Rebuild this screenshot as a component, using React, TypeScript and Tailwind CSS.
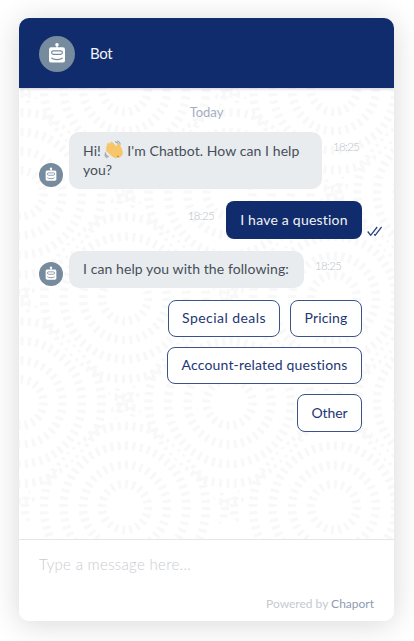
import React from "react";

const centers: [number, number][] = [
  [106, 1], [315, 1], [1.5, 105.500], [210.500, 105.500], [106, 210], [315, 210],
  [1.5, 314.500], [210.500, 314.500], [106, 419], [315, 419], [419.500, 105.500], [419.500, 314.500],
];
const rings: [number, number][] = [[23, 20], [42, 36], [61.5, 52], [81, 68], [100, 84]];

function Pattern() {
  return (
    <svg className="absolute inset-0 h-full w-full" aria-hidden="true">
      <defs>
        <clipPath id="tile">
          <path d="M0-112 112 0 0 112-112 0Z" />
        </clipPath>
      </defs>
      {centers.map(([cx, cy]) => (
        <g key={`${cx}-${cy}`} transform={`translate(${cx} ${cy})`} clipPath="url(#tile)">
          {rings.map(([r, count]) => (
            <circle
              key={r}
              r={r}
              fill="none"
              stroke="#f8f8f8"
              strokeWidth="8.5"
              pathLength={count * 10}
              strokeDasharray="4.2 5.8"
            />
          ))}
        </g>
      ))}
    </svg>
  );
}

function BotAvatar({ className }: { className: string }) {
  return (
    <svg viewBox="0 0 36 36" className={`shrink-0 ${className}`}>
      <circle cx="18" cy="18" r="18" fill="#778b9e" />
      <circle cx="18" cy="8.7" r="1.8" fill="#fff" />
      <path d="M18 9v4" stroke="#fff" strokeWidth="1.2" />
      <rect x="10" y="11.2" width="16" height="15.4" rx="2.2" fill="#fff" />
      <rect x="12.6" y="14.8" width="10.8" height="3.6" rx="1.8" fill="none" stroke="#778b9e" strokeWidth="1.2" />
      <path d="M12.5 21.8c1.3 2.3 9.7 2.3 11 0" fill="none" stroke="#778b9e" strokeWidth="1.2" />
    </svg>
  );
}

function Wave() {
  return (
    <svg viewBox="0 0 20 20" className="-ml-px inline-block h-5 w-5 align-[-4px]">
      <path d="M11 1.6Q14.5 2.5 14.9 6M13.2.8Q16 2 16.4 4.5M1.2 12.5Q1.5 15.8 4.8 16.8M.7 14.700Q1.3 17 3.5 18" fill="none" stroke="#9ba8b8" strokeWidth="1.2" />
      <path d="M3.4 3.9q1-1.4 2.2-.2l.8.8-.1-1.6q.9-1.5 2.1-.3L13 7.200V4.900q1.500-2.200 3 .3l2.100 5.600q1.400 4.500-2.600 6.400-4.200 2-7.700-1.500L2.300 11q-.5-1.700 1-1.500l-1-1.500q-.3-1.400 1-1.400l.7.300-.9-1.300z" fill="#f7c56a" stroke="#f7c56a" strokeWidth=".6" />
      <path d="m6.400 4.600 3.200 3.200M4 7l3.700 3.600" fill="none" stroke="#efbb5c" strokeWidth=".4" />
      <circle cx="14" cy="16.300" r=".6" fill="#695d4c" />
    </svg>
  );
}

function Time({ children }: { children: React.ReactNode }) {
  return <span className="block text-[11.5px] font-light leading-4 tracking-[-0.65px] text-[#b9bfc7]">{children}</span>;
}

function Choice({ children, className }: { children: React.ReactNode; className: string }) {
  return (
    <button className={`flex items-center justify-center whitespace-nowrap rounded-[8px] border border-[#3c5388] bg-white pb-[2px] text-[#1d3673] ${className}`}>
      {children}
    </button>
  );
}

export default function App() {
  return (
    <div className="h-[641px] w-[414px] overflow-hidden bg-white px-[19px] pt-[18px] font-['Lato',sans-serif] text-[14px]">
      <div className="flex h-[603px] w-[375px] flex-col overflow-hidden rounded-[10px] bg-white shadow-[0_3px_30px_rgba(0,10,10,0.16)]">
        <header className="relative z-10 flex h-[70px] shrink-0 items-center gap-[15px] bg-[#112c6c] pl-5 pt-px text-white shadow-[0_1px_3px_rgba(0,0,0,0.18)]">
          <BotAvatar className="h-9 w-9" />
          <span className="text-[15px] tracking-[-0.3px] text-[#f0f2f6]">Bot</span>
        </header>

        <main className="relative h-[451px] shrink-0 overflow-hidden">
          <Pattern />
          <div className="relative pl-5 pr-8 pt-[15px]">
            <div className="h-[29px] text-center text-[13px] leading-[18px] text-[#a5afbf]">
              <span className="relative left-[6px]">Today</span>
            </div>
            <div className="flex items-end">
              <BotAvatar className="mb-[2px] h-6 w-6" />
              <div className="ml-[6px] h-[57px] w-[253px] shrink-0 rounded-[10px] bg-[#e8ecef] pl-[14px] pt-[8px] leading-5 text-[#474e58]">
                <div className="h-5 whitespace-nowrap tracking-[0.08px]">Hi! <Wave /> I'm Chatbot. How can I help</div>
                <div>you?</div>
              </div>
              <div className="ml-[11px] self-start pt-[7px]"><Time>18:25</Time></div>
            </div>
            <div className="relative mt-3 flex justify-end">
              <div className="mr-[12px] pt-[7px]"><Time>18:25</Time></div>
              <div className="flex h-[38px] w-[136px] items-center justify-center rounded-[8px] bg-[#112c6c] pb-px tracking-[0.22px] text-[#f0f2f6]">I have a question</div>
              <svg className="absolute -right-5 bottom-[2px] h-[11px] w-[15px]" viewBox="0 0 15 11" fill="none" stroke="#284176" strokeWidth="1.3">
                <path d="m.7 5.5 3 3.8L10.200 1M7.200 8.200l1 1.100L14.600 1" />
              </svg>
            </div>
            <div className="mt-3 flex items-end">
              <BotAvatar className="mb-[2px] h-6 w-6" />
              <div className="ml-[6px] flex h-[37px] w-[235px] items-center whitespace-nowrap rounded-[10px] bg-[#e8ecef] pb-[2px] pl-[14px] tracking-[0.09px] text-[#474e58]">I can help you with the following:</div>
              <div className="ml-[11px] self-start pt-[7px]"><Time>18:25</Time></div>
            </div>
            <div className="mt-3 flex flex-col items-end gap-[10px]">
              <div className="flex gap-[10px]">
                <Choice className="h-[37px] w-[112px] tracking-[0.45px]">Special deals</Choice>
                <Choice className="h-[37px] w-[72px] tracking-[0.15px]">Pricing</Choice>
              </div>
              <Choice className="h-[37px] w-[195px] tracking-[0.18px]">Account-related questions</Choice>
              <Choice className="h-[38px] w-[65px] tracking-[-0.1px]">Other</Choice>
            </div>
          </div>
        </main>

        <footer className="flex min-h-0 flex-1 flex-col justify-between border-t border-[#e6e6e6] bg-white px-5 pb-[8px] pt-[14px]">
          <div className="text-[15px] font-light leading-5 tracking-[0.32px] text-[#c9ccd0]">Type a message here...</div>
          <div className="text-right text-[12px] leading-[18px] text-[#c5c9d1]">
            Powered by <span className="text-[#8f9bb1]">Chaport</span>
          </div>
        </footer>
      </div>
    </div>
  );
}
